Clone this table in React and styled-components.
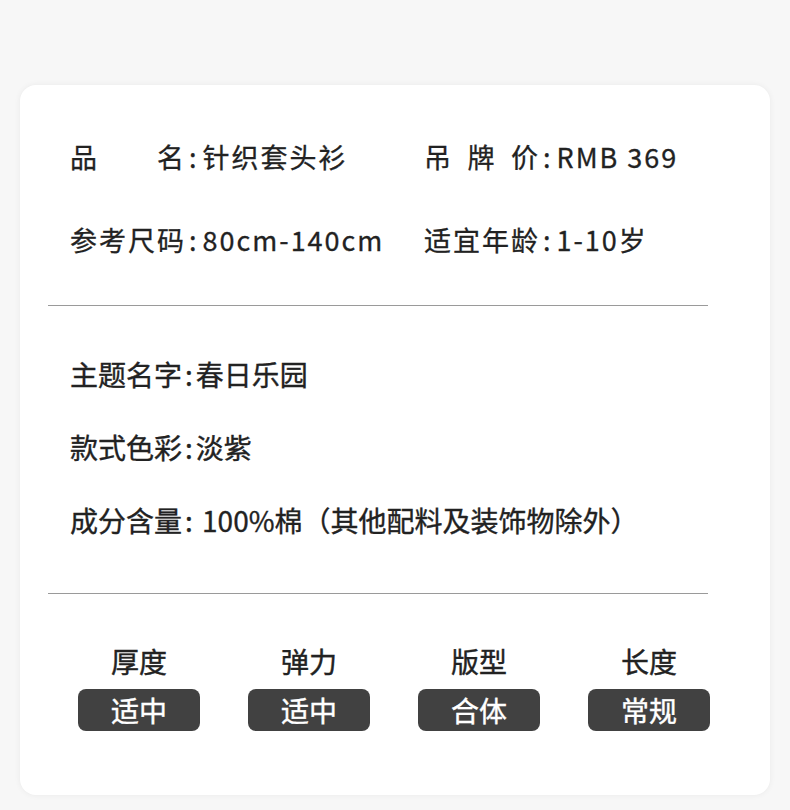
import React from "react";
import styled, { createGlobalStyle } from "styled-components";

const Global = createGlobalStyle`
  html, body { margin: 0; padding: 0; background: #f7f7f7; }
  body { font-family: "Noto Sans CJK SC", "Noto Sans", sans-serif; color: #222; }
`;

const Page = styled.div`
  width: 790px;
  height: 810px;
  box-sizing: border-box;
  padding: 85px 20px 15px 20px;
`;

const Card = styled.div`
  height: 710px;
  background: #fff;
  border-radius: 16px;
  box-shadow: 0 0 6px rgba(0, 0, 0, 0.06);
  padding-top: 51px;
  box-sizing: border-box;
`;

const SpecGrid = styled.div`
  display: grid;
  grid-template-columns: 354px 1fr;
  row-gap: 43px;
  padding-left: 50px;
`;

const SpecItem = styled.div`
  display: flex;
  align-items: center;
  height: 40px;
  font-size: 27px;
  letter-spacing: 2px;
  white-space: nowrap;
  -webkit-text-stroke: 0.3px #222;
`;

const Label = styled.span`
  display: flex;
  justify-content: space-between;
  width: 116px;
`;

const Colon = styled.span`
  margin: ${(p) => p.$m};
`;

const Divider = styled.hr`
  border: none;
  height: 1px;
  background: #9a9a9a;
  width: 660px;
  margin: ${(p) => p.$top}px 0 0 28px;
`;

const InfoList = styled.div`
  display: flex;
  flex-direction: column;
  gap: 33px;
  padding-left: 50px;
  margin-top: 48px;
`;

const InfoRow = styled.div`
  height: 40px;
  line-height: 40px;
  font-size: 28px;
  white-space: nowrap;
  -webkit-text-stroke: 0.35px #222;
`;

const Attrs = styled.div`
  display: grid;
  grid-template-columns: repeat(4, 170px);
  margin: 49px 0 0 34px;
`;

const Attr = styled.div`
  display: flex;
  flex-direction: column;
  align-items: center;
  gap: 10px;
`;

const AttrName = styled.div`
  font-size: 28px;
  line-height: 36px;
  color: #222;
  -webkit-text-stroke: 0.4px #222;
`;

const Pill = styled.div`
  width: 122px;
  height: 42px;
  border-radius: 8px;
  background: #414141;
  color: #fff;
  font-size: 28px;
  -webkit-text-stroke: 0.4px #fff;
  display: flex;
  align-items: center;
  justify-content: center;
`;

const spec = [
  { label: ["品", "名"], value: "针织套头衫" },
  { label: ["吊", "牌", "价"], value: "RMB 369" },
  { label: ["参", "考", "尺", "码"], value: "80cm-140cm" },
  { label: ["适", "宜", "年", "龄"], value: "1-10岁" },
];

const info = [
  ["主题名字", "春日乐园"],
  ["款式色彩", "淡紫"],
  ["成分含量", " 100%棉（其他配料及装饰物除外）"],
];

const attrs = [
  ["厚度", "适中"],
  ["弹力", "适中"],
  ["版型", "合体"],
  ["长度", "常规"],
];

export default function App() {
  return (
    <>
      <Global />
      <Page>
        <Card>
          <SpecGrid>
            {spec.map((s, i) => (
              <SpecItem key={i}>
                <Label>
                  {s.label.map((c, j) => (
                    <span key={j}>{c}</span>
                  ))}
                </Label>
                <Colon $m="0 4px 0 3px">:</Colon>
                <span>{s.value}</span>
              </SpecItem>
            ))}
          </SpecGrid>
          <Divider $top={46} />
          <InfoList>
            {info.map(([k, v]) => (
              <InfoRow key={k}>
                {k}
                <Colon $m="0 3px 0 3px">:</Colon>
                {v}
              </InfoRow>
            ))}
          </InfoList>
          <Divider $top={53} />
          <Attrs>
            {attrs.map(([n, v]) => (
              <Attr key={n}>
                <AttrName>{n}</AttrName>
                <Pill>{v}</Pill>
              </Attr>
            ))}
          </Attrs>
        </Card>
      </Page>
    </>
  );
}
